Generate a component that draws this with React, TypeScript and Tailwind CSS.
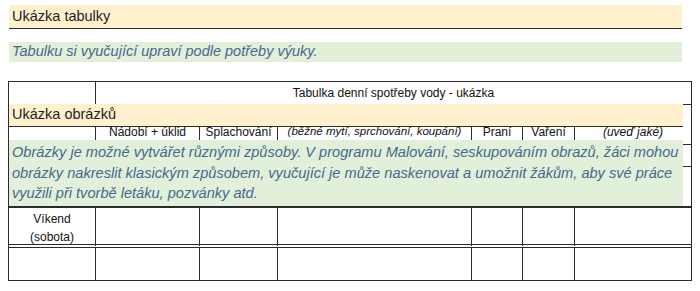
export default function App() {
  const font = { fontFamily: '"Liberation Sans", Arial, sans-serif' };
  const line = "border-[#2b2b2b]";

  return (
    <div className="w-[700px] h-[291px] bg-white pt-[5px] text-[#1e1e1e]" style={font}>
      {/* Page heading */}
      <div className={`ml-[9px] w-[673px] h-[24px] bg-[#fff1cd] border-b-[1.5px] ${line} flex items-center pl-[3px] text-[14.5px]`}>
        Ukázka tabulky
      </div>
      <div className="ml-[9px] mt-[13px] w-[673px] h-[20px] bg-[#e2efd9] flex items-center pl-[3px] text-[14.5px] italic text-[#46698f]">
        Tabulku si vyučující upraví podle potřeby výuky.
      </div>

      {/* Table with overlays */}
      <div className="relative ml-[8px] mt-[19px] w-[684px]">
        <div className={`border-[1.5px] ${line} text-[12px] text-[#111]`}>
          {/* header row */}
          <div className="grid grid-cols-[87px_1fr] h-[22px]">
            <div className={`border-r-[1.5px] ${line}`} />
            <div className="flex items-center justify-center">Tabulka denní spotřeby vody - ukázka</div>
          </div>
          {/* column names */}
          <div className={`grid grid-cols-[87px_104px_78px_194px_51px_52px_1fr] h-[40px] border-t-[1.5px] ${line}`}>
            <div className={`border-r-[1.5px] ${line}`} />
            <div className={`border-r-[1.5px] ${line} flex items-end justify-center pb-[3px]`}>Nádobí + úklid</div>
            <div className={`border-r-[1.5px] ${line} flex items-end justify-center pb-[3px]`}>Splachování</div>
            <div className={`border-r-[1.5px] ${line} flex items-end justify-center pb-[4px] italic text-[11.5px]`}>
              (běžné mytí, sprchování, koupání)
            </div>
            <div className={`border-r-[1.5px] ${line} flex items-end justify-center pb-[3px]`}>Praní</div>
            <div className={`border-r-[1.5px] ${line} flex items-end justify-center pb-[3px]`}>Vaření</div>
            <div className="flex items-end justify-center pb-[3px] italic">(uveď jaké)</div>
          </div>
          {/* hidden rows */}
          {[22, 40].map((h) => (
            <div
              key={h}
              className={`grid grid-cols-[87px_104px_78px_194px_51px_52px_1fr] border-t-[1.5px] ${line}`}
              style={{ height: h }}
            >
              {[0, 1, 2, 3, 4, 5].map((i) => (
                <div key={i} className={`border-r-[1.5px] ${line}`} />
              ))}
              <div />
            </div>
          ))}
          {/* weekend */}
          <div className={`grid grid-cols-[87px_104px_78px_194px_51px_52px_1fr] h-[38px] border-t-[2px] ${line}`}>
            <div className={`border-r-[1.5px] ${line} flex flex-col items-center justify-center pt-[2px] leading-[18px]`}>
              <span>Víkend</span>
              <span>(sobota)</span>
            </div>
            {[1, 2, 3, 4, 5].map((i) => (
              <div key={i} className={`border-r-[1.5px] ${line}`} />
            ))}
            <div />
          </div>
          <div className={`grid grid-cols-[87px_104px_78px_194px_51px_52px_1fr] h-[36px] border-t-[4px] border-double ${line}`}>
            {[0, 1, 2, 3, 4, 5].map((i) => (
              <div key={i} className={`border-r-[1.5px] border-solid ${line}`} />
            ))}
            <div />
          </div>
        </div>

        {/* overlays */}
        <div className={`absolute left-[1px] top-[23px] w-[674px] h-[23px] bg-[#fff1cd] border-b-[1.5px] ${line} flex items-center pl-[3px] text-[14.5px] text-[#1e1e1e]`}>
          Ukázka obrázků
        </div>
        <div className="absolute left-[1px] top-[59px] w-[674px] h-[66px] bg-[#e2efd9] pl-[3px] pt-[2px] text-[14.6px] italic leading-[20.5px] text-[#46698f]">
          Obrázky je možné vytvářet různými způsoby. V programu Malování, seskupováním obrazů, žáci mohou
          <br />
          obrázky nakreslit klasickým způsobem, vyučující je může naskenovat a umožnit žákům, aby své práce
          <br />
          využili při tvorbě letáku, pozvánky atd.
        </div>
      </div>
    </div>
  );
}
